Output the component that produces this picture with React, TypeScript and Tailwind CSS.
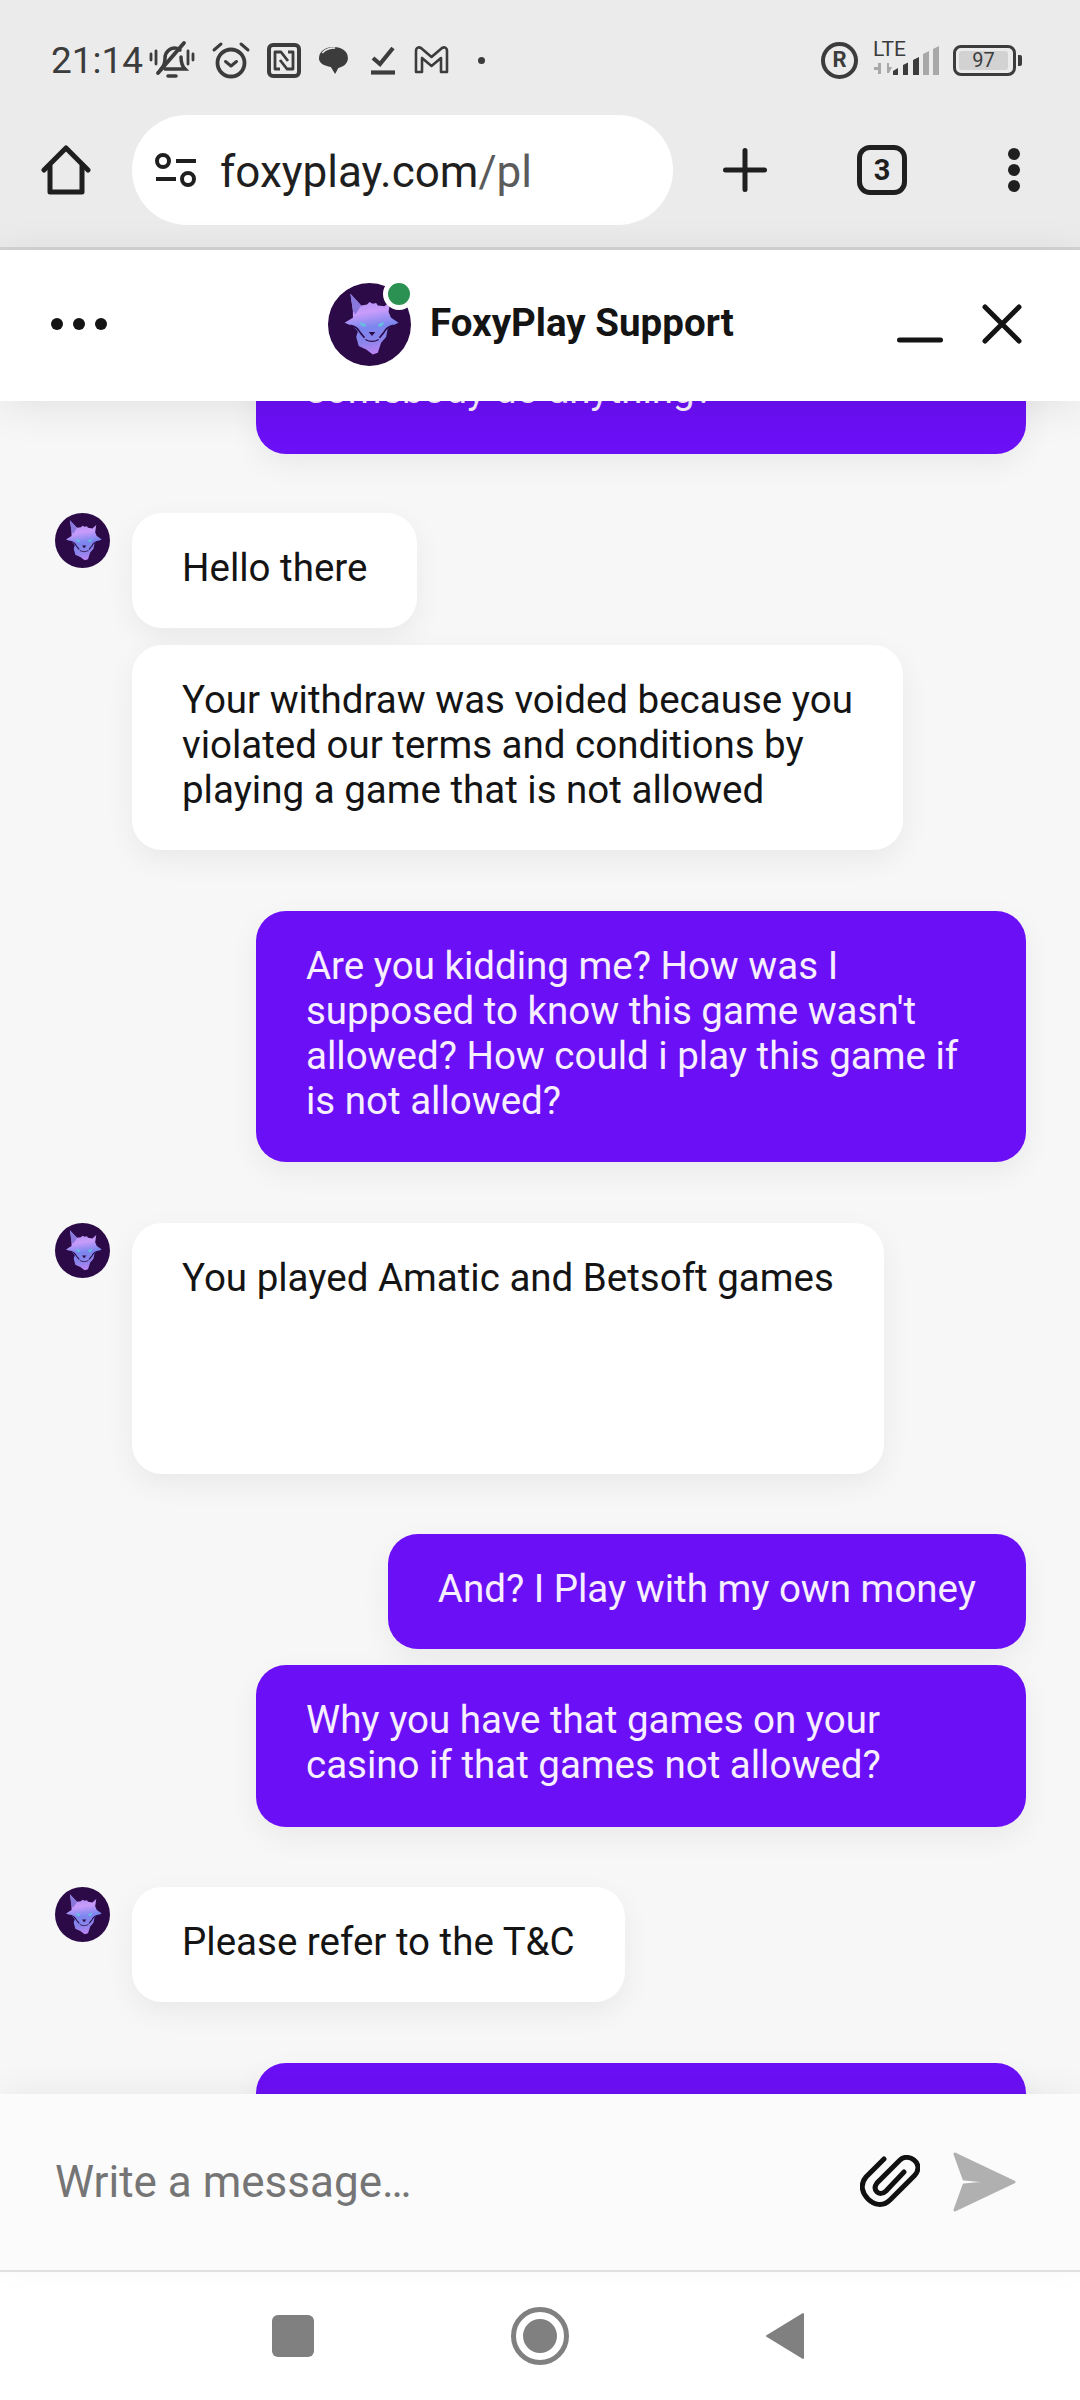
import { ReactNode } from "react";

// Small status bar icons, drawn by hand
function BellOff() {
  return (
    <svg width="46" height="40" viewBox="0 0 46 40" fill="none" stroke="#3c3c3c" strokeWidth="3.5" strokeLinecap="round">
      <path d="M12 29c3-3 4-6 4-11 0-6 5-10 10-10 2 0 4 1 5 2" />
      <path d="M32 17c0 6 1 9 4 12H16" />
      <path d="M9 33 35 3" strokeWidth="3.8" />
      <path d="M19 36h8" />
      <path d="M2 14v6M7 11v13M39 11v13M44 14v6" strokeWidth="2.8" />
    </svg>
  );
}

function AlarmIcon() {
  return (
    <svg width="40" height="38" viewBox="0 0 40 38" fill="none" stroke="#3c3c3c" strokeWidth="3.8" strokeLinecap="round" strokeLinejoin="round">
      <circle cx="20" cy="22" r="13.5" />
      <path d="M14.5 20.5 20 25l5.5-4.5" strokeWidth="3" />
      <path d="M3 9l7-6M37 9l-7-6" strokeWidth="3" />
    </svg>
  );
}

function NfcIcon() {
  return (
    <svg width="34" height="35" viewBox="0 0 34 35" fill="none" stroke="#3c3c3c" strokeLinejoin="round">
      <rect x="2" y="2" width="30" height="31" rx="4" strokeWidth="4" />
      <path d="M13 26H8V9h6l7 9" strokeWidth="2.8" />
      <path d="M21 9h5v17h-6l-7-9" strokeWidth="2.8" />
    </svg>
  );
}

function ChatIcon() {
  return (
    <svg width="31" height="29" viewBox="0 0 29 29" fill="#3c3c3c" preserveAspectRatio="none">
      <path d="M1 11C2 4 8 1 15 1c7 0 13 4 13 11 0 6-5 9-9 10l-3 6-4-7C6 20 0 17 1 11Z" />
      <path d="M4 7c3-4 8-5 12-5" stroke="#ebebeb" strokeWidth="1.4" fill="none" />
    </svg>
  );
}

function CheckLine() {
  return (
    <svg width="26" height="30" viewBox="0 0 26 30" fill="none" stroke="#3c3c3c" strokeWidth="4.2">
      <path d="M3 13l7 6L23 3" />
      <path d="M1 27.5h24" />
    </svg>
  );
}

function MailM() {
  return (
    <svg width="35" height="28" viewBox="0 0 35 28" fill="none" stroke="#3c3c3c" strokeWidth="2.6" strokeLinejoin="round">
      <path d="M2 5c0-4 3-4 5-3l10.500 9L28 2c2-1 5-1 5 3v21h-6V12l-9.500 8L8 12v14H2Z" />
    </svg>
  );
}

function SignalIcon() {
  return (
    <div className="flex flex-col w-[67px] h-[34px] relative">
      <span className="absolute left-0 top-[-4px] text-[21px] leading-[21px] text-[#3c3c3c]">LTE</span>
      <svg className="absolute left-0 top-0" width="67" height="34" viewBox="0 0 67 34">
        <path d="M1 25h4v-4l3 0v11H5v-4H1Z" fill="#a8a8a8" transform="translate(0 -1)" />
        <path d="M14 20h2v4h3l-3 6h-2Z" fill="#a8a8a8" />
        <path d="M20 32v-4l5-3v7Z" fill="#3c3c3c" />
        <path d="M30 32V22l5-2.500V32Z" fill="#3c3c3c" />
        <path d="M40 32V17l6-3v18Z" fill="#3c3c3c" />
        <path d="M50 32V11l6-3v24Z" fill="#a8a8a8" />
        <path d="M60 32V6l6-3v29Z" fill="#a8a8a8" />
      </svg>
    </div>
  );
}

function Battery() {
  return (
    <div className="flex items-center">
      <div className="w-[63px] h-[31px] rounded-[8px] border-[3px] border-[#3c3c3c] p-[3px] flex">
        <div className="w-[49px] h-full rounded-[3px] bg-[#d2d2d2] flex items-center justify-center text-[20px] leading-none text-[#3c3c3c]">97</div>
      </div>
      <div className="ml-[2px] w-[4px] h-[11px] rounded-r-[2px] bg-[#3c3c3c]" />
    </div>
  );
}

function HomeIcon() {
  return (
    <svg width="50" height="50" viewBox="0 0 50 50" fill="none" stroke="#1f1f1f" strokeWidth="5" strokeLinejoin="round" strokeLinecap="round">
      <path d="M3 25 25 3l22 22" />
      <path d="M9 21v26h32V21" />
    </svg>
  );
}

function TuneIcon() {
  return (
    <svg width="42" height="34" viewBox="0 0 42 34" fill="none" stroke="#1f1f1f" strokeWidth="4">
      <circle cx="8" cy="8" r="6" />
      <circle cx="33" cy="26" r="6" />
      <path d="M21 8h20M1 26h20" />
    </svg>
  );
}

function PlusIcon() {
  return (
    <svg width="44" height="44" viewBox="0 0 44 44" fill="none" stroke="#1f1f1f" strokeWidth="5" strokeLinecap="round">
      <path d="M22 2.500v39M2.500 22h39" />
    </svg>
  );
}

function KebabIcon() {
  return (
    <div className="flex flex-col gap-[4px]">
      <div className="w-[12px] h-[12px] rounded-full bg-[#1f1f1f]" />
      <div className="w-[12px] h-[12px] rounded-full bg-[#1f1f1f]" />
      <div className="w-[12px] h-[12px] rounded-full bg-[#1f1f1f]" />
    </div>
  );
}

// Fox head logo on the dark round badge
function FoxAvatar({ size }: { size: number }) {
  return (
    <svg width={size} height={size} viewBox="0 0 100 100" className="shrink-0">
      <defs>
        <linearGradient id="foxFur" x1="0.4" y1="0" x2="0.55" y2="1">
          <stop offset="0" stopColor="#a98cf0" />
          <stop offset="0.3" stopColor="#c99cfb" />
          <stop offset="0.55" stopColor="#7b86ee" />
          <stop offset="0.78" stopColor="#8a84ea" />
          <stop offset="1" stopColor="#c184f5" />
        </linearGradient>
      </defs>
      <circle cx="50" cy="50" r="50" fill="#2b0a47" />
      <path
        d="M27 13 40 27l7-1 3-3 4 2 4-1 2 3 8 1 7-6-2 13 3 7 9 6-9 4-4 3-2 10-6 7-4 12-6 2-8-6-9-4-3-11 2-7-6-6-10-4 10-6 0-9Z"
        fill="url(#foxFur)"
      />
      <path d="M27 13 40 27 33 38l-3-5Z" fill="#8878dc" />
      <path d="M27 51c6 1 9 3 12 9l5 6M79 51c-6 1-9 3-12 9l-5 6" fill="none" stroke="#2b0a47" strokeWidth="2" />
      <path d="M45 68c5 3 11 3 16 0" fill="none" stroke="#2b0a47" strokeWidth="1.4" />
      <path d="M38 47l8 3-2 3-4-2ZM68 47l-8 3 2 3 4-2Z" fill="#5fc6dc" />
      <path d="M49 59h8l-4 5Z" fill="#2b0a47" />
    </svg>
  );
}

function Bubble({ mine, width, height, lines, className = "" }: { mine?: boolean; width?: string; height?: string; lines: string[]; className?: string }) {
  return (
    <div
      className={`rounded-[30px] px-[50px] pt-[32px] pb-[38px] text-[38.5px] leading-[45px] shadow-[0_10px_30px_rgba(0,0,0,0.06)] ${
        mine ? "bg-[#6b0ff6] text-[#f7efff]" : "bg-white text-[#141414]"
      } ${width ?? "w-fit"} ${height ?? ""} ${className}`}
    >
      {lines.map((l) => (
        <div key={l} className="whitespace-nowrap">{l}</div>
      ))}
    </div>
  );
}

function AgentGroup({ children }: { children: ReactNode }) {
  return (
    <div className="flex gap-[22px]">
      <FoxAvatar size={55} />
      <div className="flex flex-col gap-[17px]">{children}</div>
    </div>
  );
}

export default function App() {
  return (
    <div className="w-[1080px] h-[2400px] flex flex-col overflow-hidden bg-white" style={{ fontFamily: "Roboto, sans-serif" }}>
      {/* browser chrome */}
      <div className="bg-[#ebebeb] border-b-[3px] border-[#d4d4d4] shrink-0">
        <div className="h-[115px] pt-[5px] flex items-center pl-[51px]">
          <span className="text-[37px] text-[#3c3c3c] leading-none w-[98px]">21:14</span>
          <BellOff />
          <div className="ml-[16px]"><AlarmIcon /></div>
          <div className="ml-[16px]"><NfcIcon /></div>
          <div className="ml-[17px]"><ChatIcon /></div>
          <div className="ml-[21px]"><CheckLine /></div>
          <div className="ml-[18px]"><MailM /></div>
          <div className="ml-[29px] w-[7px] h-[7px] rounded-full bg-[#3c3c3c]" />
          <div className="ml-auto flex items-center pr-[58px]">
            <div className="w-[37px] h-[37px] rounded-full border-[4px] border-[#3c3c3c] flex items-center justify-center text-[22px] font-bold text-[#3c3c3c] leading-none">R</div>
            <div className="ml-[15px]"><SignalIcon /></div>
            <div className="ml-[13px]"><Battery /></div>
          </div>
        </div>
        <div className="h-[132px] pb-[22px] flex items-center pl-[41px]">
          <HomeIcon />
          <div className="ml-[41px] w-[541px] h-[110px] rounded-full bg-white flex items-center pl-[23px]">
            <TuneIcon />
            <span className="ml-[23px] mt-[3px] text-[44px] leading-none text-[#1f1f1f]">
              foxyplay.com<span className="text-[#5b5b5b]">/pl</span>
            </span>
          </div>
          <div className="ml-[50px]"><PlusIcon /></div>
          <div className="ml-[90px] w-[50px] h-[50px] rounded-[13px] border-[5px] border-[#1f1f1f] flex items-center justify-center text-[29px] font-bold text-[#1f1f1f] leading-none">3</div>
          <div className="ml-[101px]"><KebabIcon /></div>
        </div>
      </div>

      {/* chat header */}
      <div className="relative z-10 h-[151px] pb-[3px] shrink-0 bg-white flex items-center shadow-[0_6px_40px_rgba(0,0,0,0.09)]">
        <div className="ml-[51px] flex gap-[10px]">
          <div className="w-[12px] h-[12px] rounded-full bg-[#141414]" />
          <div className="w-[12px] h-[12px] rounded-full bg-[#141414]" />
          <div className="w-[12px] h-[12px] rounded-full bg-[#141414]" />
        </div>
        <div className="ml-[221px] relative">
          <FoxAvatar size={83} />
          <div className="absolute left-[55px] top-[-5px] w-[32px] h-[32px] rounded-full bg-[#2b9152] border-[5px] border-white box-border" />
        </div>
        <span className="ml-[19px] mb-[2px] text-[38.5px] font-bold text-[#141414] whitespace-nowrap">FoxyPlay Support</span>
        <div className="ml-auto mr-[58px] flex items-center gap-[39px]">
          <svg width="46" height="46" viewBox="0 0 46 46" fill="none" stroke="#141414" strokeWidth="5" strokeLinecap="round" className="translate-y-[2px]">
            <path d="M2.500 37h41" />
          </svg>
          <svg width="40" height="40" viewBox="0 0 40 40" fill="none" stroke="#141414" strokeWidth="5" strokeLinecap="round">
            <path d="M3 3l34 34M37 3 3 37" />
          </svg>
        </div>
      </div>

      {/* messages */}
      <div className="flex-1 min-h-0 overflow-hidden bg-[#f7f7f8] pl-[55px] pr-[54px] flex flex-col gap-[61px]">
        <div className="self-end -mt-[66px] -mb-[2px]">
          <Bubble mine width="w-[770px]" height="h-[119px]" lines={["somebody do anything?"]} />
        </div>
        <AgentGroup>
          <Bubble lines={["Hello there"]} />
          <Bubble lines={["Your withdraw was voided because you", "violated our terms and conditions by", "playing a game that is not allowed"]} />
        </AgentGroup>
        <div className="self-end">
          <Bubble
            mine
            width="w-[770px]"
            height="h-[251px]"
            lines={["Are you kidding me? How was I", "supposed to know this game wasn't", "allowed? How could i play this game if", "is not allowed?"]}
          />
        </div>
        <AgentGroup>
          <Bubble height="h-[251px]" lines={["You played Amatic and Betsoft games"]} />
        </AgentGroup>
        <div className="self-end flex flex-col items-end gap-[16px] -mt-[1px] -mb-[1px]">
          <Bubble mine lines={["And? I Play with my own money"]} />
          <Bubble mine width="w-[770px]" height="h-[162px]" lines={["Why you have that games on your", "casino if that games not allowed?"]} />
        </div>
        <AgentGroup>
          <Bubble lines={["Please refer to the T&C"]} />
        </AgentGroup>
        <div className="self-end shrink-0">
          <Bubble mine width="w-[770px]" lines={[]} className="h-[160px]" />
        </div>
      </div>

      {/* composer */}
      <div className="relative z-10 h-[178px] shrink-0 bg-[#fbfbfb] border-b-[2px] border-[#e0e0e0] flex items-center pl-[55px] shadow-[0_-6px_30px_rgba(0,0,0,0.05)]">
        <span className="text-[44px] leading-none text-[#757575]">Write a message…</span>
        <div className="ml-auto flex items-center pr-[64px] gap-[33px]">
          <svg width="60" height="54" viewBox="0 0 60 54" fill="none" stroke="#111111" strokeWidth="5" strokeLinecap="round">
            <path d="M24 4 6 22c-7 8-3 17 2 22 6 6 15 8 22 1L55 20c5-6 3-12-1-15-4-3-10-4-14 0L17 28c-3 4-2 7 0 9 2 2 6 2 9-1L44 17" />
          </svg>
          <svg width="63" height="60" viewBox="0 0 63 60" fill="#b0b0b0" stroke="#b0b0b0" strokeWidth="3" strokeLinejoin="round">
            <path d="M2 2 61 30 2 58 11 33 42 30 11 27Z" />
          </svg>
        </div>
      </div>

      {/* android nav */}
      <div className="h-[128px] shrink-0 bg-white flex items-center">
        <div className="ml-[272px] w-[42px] h-[42px] rounded-[6px] bg-[#808080]" />
        <div className="ml-[197px] w-[58px] h-[58px] rounded-full border-[5px] border-[#808080] flex items-center justify-center">
          <div className="w-[34px] h-[34px] rounded-full bg-[#808080]" />
        </div>
        <svg width="40" height="48" viewBox="0 0 40 48" className="ml-[196px]" fill="#808080" stroke="#808080" strokeWidth="2" strokeLinejoin="round">
          <path d="M38 2v44L2 24Z" />
        </svg>
      </div>
    </div>
  );
}
